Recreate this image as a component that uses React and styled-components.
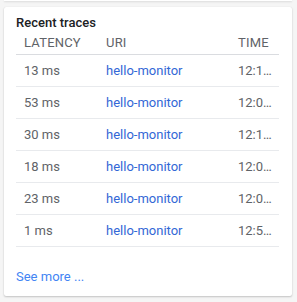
import React from "react";
import styled, { createGlobalStyle } from "styled-components";

const GlobalStyle = createGlobalStyle`
  body {
    margin: 0;
    background: #f5f5f5;
    font-family: Roboto, "Liberation Sans", sans-serif;
  }
`;

const Page = styled.div`
  display: flex;
  flex-direction: column;
  gap: 6px;
  padding: 0 5px 0 4px;
  width: 297px;
  height: 302px;
  box-sizing: border-box;
`;

const PrevCard = styled.div`
  height: 1px;
  background: #fff;
  box-shadow: 0 1px 2px rgba(0, 0, 0, 0.15);
`;

const Card = styled.div`
  background: #fff;
  box-shadow: 0 1px 2px rgba(0, 0, 0, 0.2), 0 0 1px rgba(0, 0, 0, 0.1);
  border-radius: 2px;
  padding: 8px 12px 0 12px;
  height: 289px;
  box-sizing: border-box;
  display: flex;
  flex-direction: column;
`;

const Title = styled.div`
  font-size: 13px;
  font-weight: 500;
  color: #202124;
  line-height: 16px;
`;

const Table = styled.table`
  border-collapse: collapse;
  table-layout: fixed;
  width: 263px;
  font-size: 13px;
`;

const Th = styled.th`
  text-align: left;
  font-weight: 400;
  color: #5f6368;
  height: 23px;
  padding: 0 8px;
  border-bottom: 1px solid #dadce0;
  letter-spacing: 0.2px;
`;

const Td = styled.td`
  height: 31px;
  padding: 0 8px;
  border-bottom: 1px solid #e8eaed;
  color: ${(p) => (p.$link ? "#3367d6" : "#5f6368")};
  white-space: nowrap;
`;

const SeeMore = styled.a`
  display: block;
  margin-top: 22px;
  line-height: 16px;
  font-size: 13px;
  color: #4285f4;
  text-decoration: none;
`;

const rows = [
  ["13 ms", "12:1…"],
  ["53 ms", "12:0…"],
  ["30 ms", "12:1…"],
  ["18 ms", "12:0…"],
  ["23 ms", "12:0…"],
  ["1 ms", "12:5…"],
];

export default function App() {
  return (
    <>
      <GlobalStyle />
      <Page>
        <PrevCard />
        <Card>
          <Title>Recent traces</Title>
          <Table>
            <colgroup>
              <col style={{ width: 82 }} />
              <col style={{ width: 132 }} />
              <col />
            </colgroup>
            <thead>
              <tr>
                <Th>LATENCY</Th>
                <Th>URI</Th>
                <Th>TIME</Th>
              </tr>
            </thead>
            <tbody>
              {rows.map(([lat, time], i) => (
                <tr key={i}>
                  <Td>{lat}</Td>
                  <Td $link>hello-monitor</Td>
                  <Td>{time}</Td>
                </tr>
              ))}
            </tbody>
          </Table>
          <SeeMore href="#">See more ...</SeeMore>
        </Card>
      </Page>
    </>
  );
}
